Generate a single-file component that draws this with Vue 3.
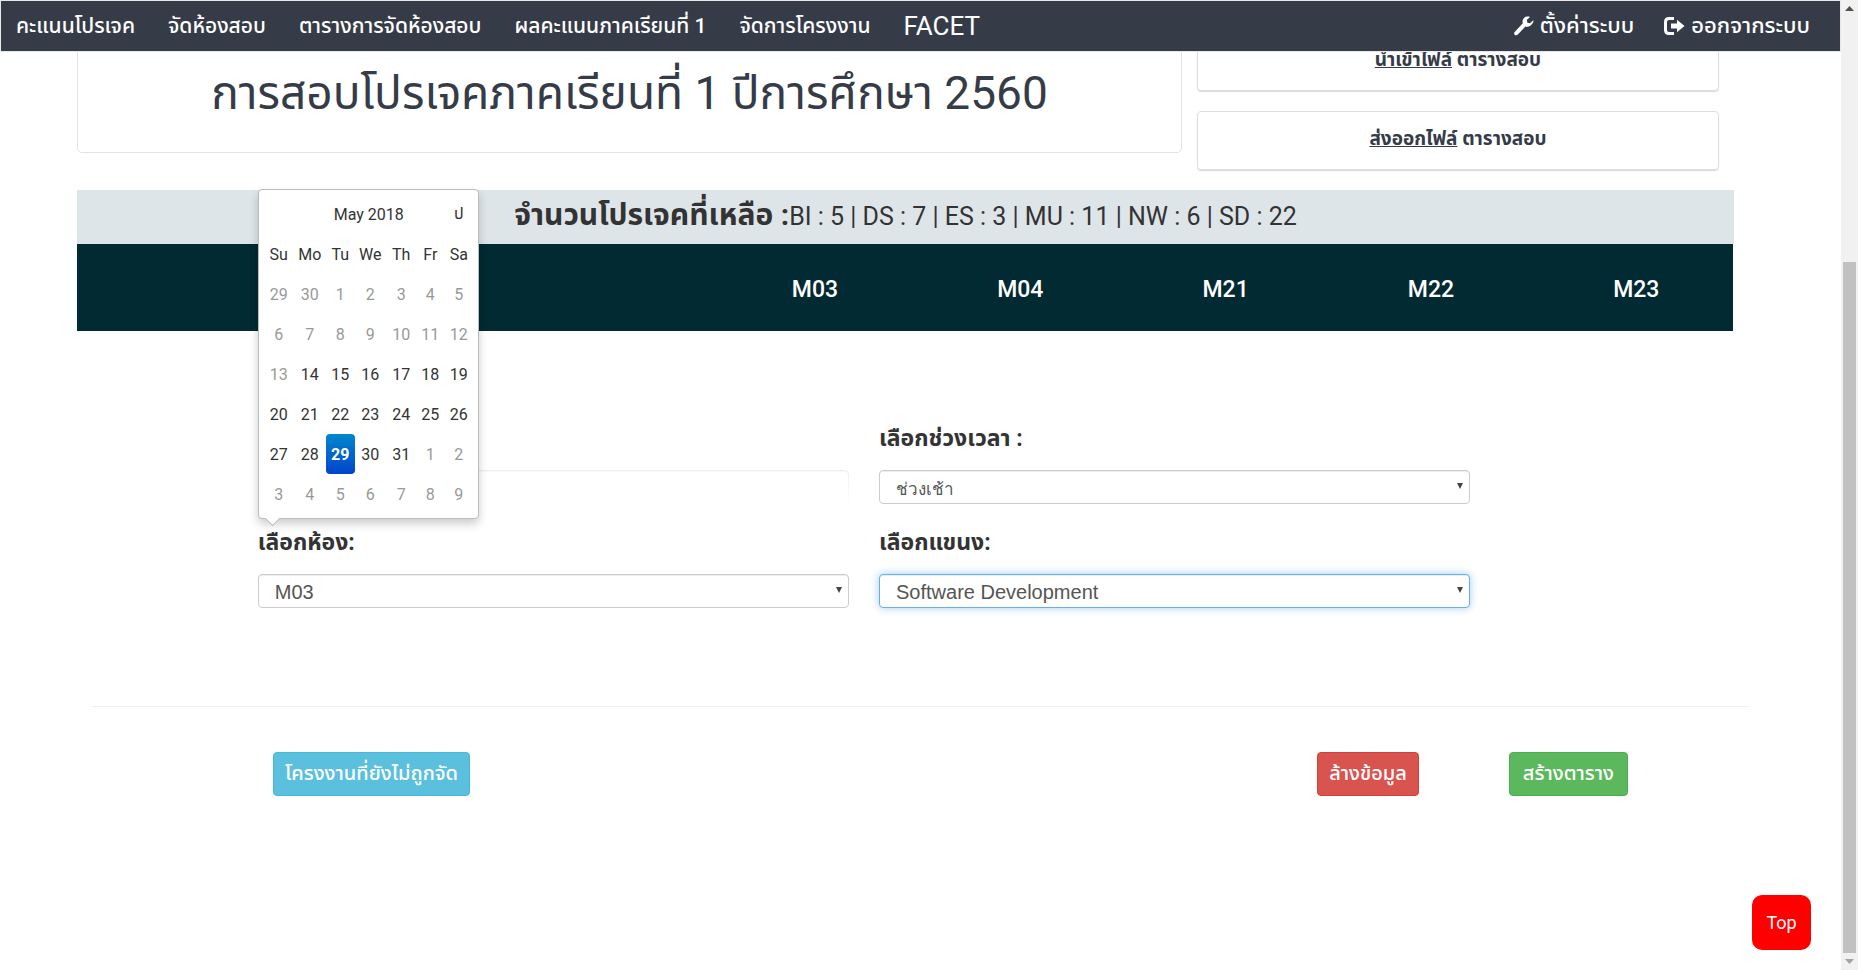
<script setup>
import { ref } from 'vue'

const navLinks = ['คะแนนโปรเจค', 'จัดห้องสอบ', 'ตารางการจัดห้องสอบ', 'ผลคะแนนภาคเรียนที่ 1', 'จัดการโครงงาน', 'FACET']
const rooms = ['M03', 'M04', 'M21', 'M22', 'M23']
const weekdays = ['Su', 'Mo', 'Tu', 'We', 'Th', 'Fr', 'Sa']
const numbers = [29, 30, ...Array.from({ length: 31 }, (_, i) => i + 1), ...Array.from({ length: 9 }, (_, i) => i + 1)]
const weeks = Array.from({ length: 6 }, (_, w) =>
  numbers.slice(w * 7, w * 7 + 7).map((n, d) => {
    const i = w * 7 + d
    return { n, muted: i < 15 || i > 32, active: i === 30 }
  })
)
const date = ref('')
const room = ref('M03')
const period = ref('ช่วงเช้า')
const branch = ref('Software Development')
</script>

<template>
  <div class="shell">
    <div class="page">
      <nav class="navbar">
        <div class="nav-group links">
          <a v-for="l in navLinks" :key="l" :class="{ latin: l === 'FACET' }" href="#">{{ l }}</a>
        </div>
        <div class="nav-group tools">
          <a href="#">
            <svg width="20" height="20" viewBox="0 0 20 20" aria-hidden="true"><path fill="currentColor" d="M19.3 4.2 16 7.3l-2.6-.6-.6-2.6L16 1C13.9.1 11.3.5 9.800 2.200c-1.300 1.400-1.600 3.300-1 5L.9 15.700c-1 1-1 2.300-.2 3.100.9.800 2.200.700 3.100-.3l7.600-8.100c1.900.6 4 .2 5.500-1.200 1.500-1.300 2.900-3.300 2.400-5z" /></svg>
            ตั้งค่าระบบ
          </a>
          <a href="#">
            <svg width="21" height="18" viewBox="0 0 21 18" aria-hidden="true"><path fill="none" stroke="currentColor" stroke-width="3" d="M10 1.500H5Q1.500 1.500 1.500 5v8q0 3.500 3.500 3.500h5" /><path fill="currentColor" d="M7 6.500h6V2.700L20.500 9 13 15.300v-3.800H7z" /></svg>
            ออกจากระบบ
          </a>
        </div>
      </nav>

      <main class="container">
        <section class="intro">
          <div class="title-card"><h1>การสอบโปรเจคภาคเรียนที่ 1 ปีการศึกษา 2560</h1></div>
          <div class="files">
            <div class="file-card"><a href="#">นำเข้าไฟล์</a> ตารางสอบ</div>
            <div class="file-card"><a href="#">ส่งออกไฟล์</a> ตารางสอบ</div>
          </div>
        </section>

        <section class="summary">
          <strong>จำนวนโปรเจคที่เหลือ :</strong>
          <span>BI : 5 | DS : 7 | ES : 3 | MU : 11 | NW : 6 | SD : 22</span>
        </section>

        <table class="rooms">
          <thead><tr><th class="lead"></th><th v-for="r in rooms" :key="r" scope="col">{{ r }}</th></tr></thead>
        </table>

        <form class="fields" @submit.prevent>
          <div class="field picker-field">
            <div class="control"><input v-model="date" class="date" type="text" aria-label="เลือกวันที่"></div>
            <div class="datepicker">
              <table>
                <colgroup>
                  <col v-for="d in weekdays" :key="d" :class="'col-' + d.toLowerCase()">
                </colgroup>
                <thead>
                  <tr><th></th><th colspan="5">May 2018</th><th>ป</th></tr>
                  <tr><th v-for="d in weekdays" :key="d" scope="col">{{ d }}</th></tr>
                </thead>
                <tbody>
                  <tr v-for="(w, i) in weeks" :key="i">
                    <td v-for="(d, j) in w" :key="j" :class="{ muted: d.muted, active: d.active }">{{ d.n }}</td>
                  </tr>
                </tbody>
              </table>
            </div>
          </div>
          <div class="field">
            <label for="period">เลือกช่วงเวลา :</label>
            <div class="control">
              <select id="period" v-model="period" class="thai"><option>ช่วงเช้า</option></select>
              <svg class="caret" width="6" height="6" viewBox="0 0 6 6" aria-hidden="true"><path d="M0 0h6L3 6z" /></svg>
            </div>
          </div>
          <div class="field">
            <label for="room">เลือกห้อง:</label>
            <div class="control">
              <select id="room" v-model="room"><option v-for="r in rooms" :key="r">{{ r }}</option></select>
              <svg class="caret" width="6" height="6" viewBox="0 0 6 6" aria-hidden="true"><path d="M0 0h6L3 6z" /></svg>
            </div>
          </div>
          <div class="field">
            <label for="branch">เลือกแขนง:</label>
            <div class="control">
              <select id="branch" v-model="branch" class="focused"><option>Software Development</option></select>
              <svg class="caret" width="6" height="6" viewBox="0 0 6 6" aria-hidden="true"><path d="M0 0h6L3 6z" /></svg>
            </div>
          </div>
        </form>

        <hr>

        <div class="actions">
          <button type="button" class="btn info">โครงงานที่ยังไม่ถูกจัด</button>
          <button type="button" class="btn danger">ล้างข้อมูล</button>
          <button type="button" class="btn success">สร้างตาราง</button>
        </div>
      </main>
      <button type="button" class="top">Top</button>
    </div>

    <div class="scrollbar" aria-hidden="true">
      <svg width="9" height="5" viewBox="0 0 9 5"><path fill="#505050" d="M4.500 0 9 5H0z" /></svg>
      <div class="track"><div class="thumb"></div></div>
      <svg width="9" height="5" viewBox="0 0 9 5"><path fill="#a3a3a3" d="M0 0h9L4.500 5z" /></svg>
    </div>
  </div>
</template>

<style>
body { background: #fff; }
</style>

<style scoped>
* { box-sizing: border-box; }
.shell {
  display: flex;
  height: 100vh;
  overflow: hidden;
  color: #333;
  font-family: Roboto, "Noto Sans Thai", "Noto Sans", sans-serif;
}
.page { flex: 1; min-width: 0; }
.navbar {
  position: relative;
  z-index: 2;
  display: flex;
  justify-content: space-between;
  height: 52px;
  padding-right: 15px;
  background: #363b48;
  border: 1px solid #e7e7e7;
}
.nav-group { display: flex; }
.links { gap: 3px; }
.nav-group a {
  display: flex;
  align-items: center;
  gap: 6px;
  padding: 0 15px;
  color: #fff;
  font-size: 21px;
  font-weight: 500;
  text-decoration: none;
  white-space: nowrap;
}
.nav-group .latin { font-size: 26px; font-weight: 400; }
.tools a { font-size: 22px; }
.container { margin: -20px 5% 0; }
.intro {
  display: grid;
  grid-template-columns: 1105fr 522fr;
  gap: 15px;
  margin: 0 30px 20px -15px;
}
.title-card {
  height: 121px;
  border: 1px solid #e3e3e3;
  border-radius: 5px;
  text-align: center;
}
h1 {
  margin: 30px 0 0;
  color: #363b48;
  font-size: 46px;
  font-weight: 400;
  line-height: 60px;
  white-space: nowrap;
}
.files { display: flex; flex-direction: column; gap: 20px; }
.file-card {
  height: 59px;
  border: 1px solid #ddd;
  border-radius: 4px;
  box-shadow: 0 1px 1px rgba(0, 0, 0, .15);
  color: #363b48;
  font-size: 19px;
  font-weight: 700;
  line-height: 54px;
  text-align: center;
}
.file-card a { color: inherit; }
.summary {
  display: flex;
  align-items: baseline;
  justify-content: center;
  height: 54px;
  margin: 0 15px 0 -15px;
  background: #dee5e9;
  line-height: 50px;
  white-space: nowrap;
}
.summary strong { font-size: 30px; }
.summary span { font-size: 25px; }
.rooms {
  width: calc(100% - 1px);
  height: 87px;
  margin-left: -15px;
  border-collapse: collapse;
  table-layout: fixed;
  background: #022a33;
  color: #fff;
  font-size: 23px;
}
.rooms th { padding: 4px 0 0 12px; font-weight: 500; }
.rooms .lead { width: 38%; }
.fields {
  display: grid;
  grid-template-columns: 1fr 1fr;
  gap: 20px 30px;
  margin-right: -3px;
  padding: 89px 17% 0 10%;
}
.field { position: relative; }
.picker-field { padding-top: 50px; }
label {
  display: block;
  height: 50px;
  font-size: 23px;
  font-weight: 700;
  line-height: 38px;
}
.control { position: relative; }
select, .date {
  display: block;
  width: 100%;
  height: 34px;
  padding: 2px 16px 0;
  border: 1px solid #ccc;
  border-radius: 4px;
  background: #fff;
  box-shadow: inset 0 1px 1px rgba(0, 0, 0, .075);
  color: #555;
  font: 20px "Liberation Sans", sans-serif;
  appearance: none;
  outline: none;
}
.thai { padding-top: 4px; font-size: 17px; }
.date {
  opacity: .35;
  mask-image: linear-gradient(#000, transparent);
}
.focused {
  border-color: #66afe9;
  box-shadow: inset 0 1px 1px rgba(0, 0, 0, .075), 0 0 8px rgba(102, 175, 233, .6);
}
.caret { position: absolute; top: 13px; right: 7px; fill: #444; }
.datepicker {
  position: absolute;
  z-index: 1;
  bottom: -15px;
  left: 0;
  width: 221px;
  padding: 4px 4px 4px 5px;
  border: 1px solid #bbb;
  border-radius: 4px;
  background: #fff;
  box-shadow: 0 5px 10px rgba(0, 0, 0, .2);
}
.datepicker::after {
  position: absolute;
  bottom: -6px;
  left: 8px;
  width: 10px;
  height: 10px;
  border: solid #bbb;
  border-width: 0 1px 1px 0;
  background: #fff;
  content: "";
  transform: rotate(45deg);
}
.datepicker table { width: 100%; border-collapse: collapse; table-layout: fixed; }
.col-su, .col-sa { width: 30px; }
.col-mo { width: 32px; }
.col-tu { width: 29px; }
.col-we, .col-th { width: 31px; }
.col-fr { width: 27px; }
.datepicker th, .datepicker td {
  height: 40px;
  padding: 0;
  border-radius: 4px;
  font-size: 16px;
  font-weight: 400;
  text-align: center;
}
.datepicker .muted { color: #999; }
.datepicker .active {
  background: linear-gradient(#08c, #04c);
  color: #fff;
  font-weight: 700;
}
hr { margin: 98px 0 45px; border: 0; border-top: 1px solid #eee; }
.actions { display: flex; padding: 0 121px 0 181px; }
.btn {
  height: 44px;
  padding: 0 11px;
  border: 1px solid;
  border-radius: 4px;
  color: #fff;
  font: 500 20px Roboto, "Noto Sans Thai", sans-serif;
}
.info { background: #5bc0de; border-color: #46b8da; }
.danger { margin-left: auto; background: #d9534f; border-color: #d43f3a; }
.success { margin-left: 90px; padding: 0 13px; background: #5cb85c; border-color: #4cae4c; }
.top {
  position: fixed;
  right: 47px;
  bottom: 20px;
  width: 59px;
  height: 55px;
  padding: 0;
  border: 0;
  border-radius: 10px;
  background: #f00;
  color: #fff;
  font: 18px Roboto, sans-serif;
}
.scrollbar {
  display: flex;
  flex: none;
  flex-direction: column;
  align-items: center;
  width: 17px;
  padding: 6px 0;
  background: #f1f1f1;
}
.track { flex: 1; width: 13px; padding: 251px 0 6px; display: flex; }
.thumb { flex: 1; background: #c1c1c1; }
</style>
